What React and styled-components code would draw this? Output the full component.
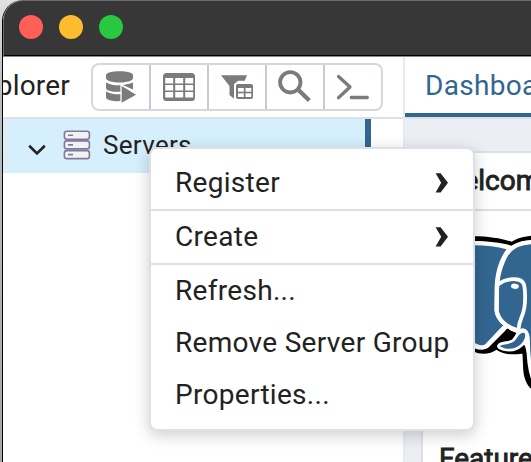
import React from 'react';
import styled, { createGlobalStyle } from 'styled-components';

const Global = createGlobalStyle`
  *, *::before, *::after { box-sizing: border-box; }
  body {
    margin: 0;
    overflow: hidden;
    font-family: Roboto, "Liberation Sans", sans-serif;
    color: #222222;
  }
`;

const line = '#dde0e6';
const blue = '#326690';

const Desktop = styled.div`
  width: 531px;
  height: 462px;
  padding-left: 2px;
  overflow: hidden;
  position: relative;
  background: linear-gradient(#e0e0e0, #bcbcbc 20%, #a6a6a6);
`;

const Window = styled.div`
  height: 462px;
  display: flex;
  flex-direction: column;
  overflow: hidden;
  background: #fff;
  border-left: 1px solid #000;
  border-top-left-radius: 21px;
`;

const TitleBar = styled.div`
  flex: none;
  height: 57px;
  padding: 0 0 3px 15px;
  display: flex;
  align-items: center;
  gap: 16px;
  background: #373737;
  border-top: 1px solid #6c6c6c;
  border-left: 1px solid #6c6c6c;
  border-top-left-radius: 20px;
  border-bottom: 1px solid #8a8a8a;
  box-shadow: inset 0 -1px 0 #000;
`;

const Light = styled.span`
  width: 24px;
  height: 24px;
  border-radius: 50%;
  background: ${(p) => p.$color};
`;

const Body = styled.div`
  flex: 1;
  display: flex;
  min-height: 0;
`;

const Explorer = styled.div`
  flex: none;
  width: 402px;
  border-right: 2px solid #e7e9ef;
`;

const ExplorerHeader = styled.div`
  height: 62px;
  display: flex;
  align-items: center;
  border-bottom: 2px solid ${line};
  overflow: hidden;
`;

const ExplorerTitle = styled.div`
  width: 67px;
  flex: none;
  display: flex;
  justify-content: flex-end;
  font-size: 28px;
  line-height: 32px;
  letter-spacing: 0.2px;
  padding-bottom: 2px;
  white-space: nowrap;
`;

const ButtonGroup = styled.div`
  display: flex;
  width: 292px;
  height: 48px;
  margin-left: 21px;
  border: 2px solid #d3d7df;
  border-radius: 8px;
`;

const ToolButton = styled.button`
  flex: none;
  width: 58px;
  height: 44px;
  padding: 0;
  border: 0;
  border-right: 2px solid #c5cad6;
  background: none;
  color: #7b7b7b;
  display: flex;
  &:last-child { border-right: 0; width: 56px; }
  svg { display: block; flex: none; }
`;

const TreeRow = styled.div`
  width: 368px;
  height: 54px;
  display: flex;
  align-items: center;
  background: #d6effc;
  border-right: 6px solid ${blue};
  font-size: 26px;
  line-height: 32px;
  letter-spacing: 0.3px;
`;

const RowMark = styled.span`
  width: 2px;
  height: 50px;
  margin: 0 19px 0 4px;
  background: #e3e8f1;
`;

const RowLabel = styled.span`
  margin-left: 12px;
  padding-bottom: 3px;
`;

const Main = styled.div`
  flex: 1;
  min-width: 0;
  display: flex;
  flex-direction: column;
  overflow: hidden;
`;

const TabBar = styled.div`
  flex: none;
  height: 62px;
  border-bottom: 2px solid ${line};
`;

const Tab = styled.div`
  width: 180px;
  height: 60px;
  padding-left: 20px;
  border-bottom: 4px solid ${blue};
  color: ${blue};
  font-size: 28px;
  line-height: 58px;
  letter-spacing: 0.3px;
`;

const Content = styled.div`
  flex: 1;
  padding: 32px 0 0 16px;
  background: #ebeef3;
`;

const Card = styled.div`
  width: 220px;
  height: 360px;
  background: #fff;
  border: 2px solid ${line};
`;

const Heading = styled.div`
  padding-left: 16px;
  font-size: 28px;
  line-height: 56px;
  -webkit-text-stroke: 0.9px #222;
`;

const CardTitle = styled(Heading)`
  height: 58px;
  border-bottom: 2px solid ${line};
`;

const LogoArea = styled.div`
  height: 220px;
  padding: 19px 0 0 50px;
`;

const Menu = styled.div`
  position: absolute;
  left: 149px;
  top: 147px;
  width: 326px;
  height: 284px;
  padding: 8px 0;
  background: #fff;
  border: 2px solid ${line};
  border-radius: 8px;
  box-shadow: 0 4px 16px rgba(0, 0, 0, 0.2);
`;

const MenuItem = styled.div`
  height: 52px;
  padding: 0 24px;
  display: flex;
  align-items: center;
  justify-content: space-between;
  font-size: 28px;
  line-height: 32px;
  letter-spacing: 0.3px;
  white-space: nowrap;
`;

const Separator = styled.div`
  height: 2px;
  background: ${line};
`;

const DatabaseIcon = () => (
  <svg width="56" height="44" viewBox="93 65 56 44" fill="currentColor">
    <path d="M106 75.3c0-5.4 27-5.4 27 0v2.6c0 6-27 6-27 0z" />
    <path d="M106 82.5c4 2.3 9 2.9 14.4 2.8v6.5c-6 .2-14.4-.6-14.4-3.9z" />
    <path d="M122.800 85c4-.4 7.700-1.100 10.200-2.400v6.900z" />
    <path d="M106 91.500c4 2.300 9 2.900 14.400 2.800v6.800c-6 .3-14.400-.6-14.400-3.900z" />
    <path d="M121.700 86L136 94.700l-14.300 8.100z" />
  </svg>
);

const TableIcon = () => (
  <svg width="56" height="44" viewBox="151 65 56 44">
    <rect x="163" y="73" width="32" height="28" rx="3.5" fill="currentColor" />
    <g fill="#fff">
      {[78, 85, 92].map((y) =>
        [165.2, 175.2, 185.2].map((x) => (
          <rect key={`${x}-${y}`} x={x} y={y} width="8" height="5.4" rx="0.5" />
        ))
      )}
    </g>
  </svg>
);

const FilterIcon = () => (
  <svg width="56" height="44" viewBox="209 65 56 44">
    <path d="M221 75.3h26l-2.3 5.5h-6.4L234 84v14.8L229.500 95v-9z" fill="currentColor" />
    <rect x="235" y="83" width="19" height="17" rx="2" fill="#fff" />
    <rect x="236" y="84" width="17" height="15" rx="2" fill="currentColor" />
    <g fill="#fff">
      <rect x="238" y="88" width="5.8" height="3.7" />
      <rect x="245.5" y="88" width="5.8" height="3.7" />
      <rect x="238" y="93.3" width="5.8" height="3.7" />
      <rect x="245.5" y="93.3" width="5.8" height="3.7" />
    </g>
  </svg>
);

const SearchIcon = () => (
  <svg width="56" height="44" viewBox="267 65 56 44" fill="none" stroke="currentColor" strokeWidth="3.8">
    <circle cx="290.3" cy="82.3" r="10.2" />
    <path d="M298 89.500l11.300 11" strokeWidth="4.4" />
  </svg>
);

const TerminalIcon = () => (
  <svg width="56" height="44" viewBox="325 65 56 44" fill="none" stroke="currentColor" strokeWidth="3.3" strokeLinecap="round" strokeLinejoin="round">
    <path d="M338.5 76.5L350 87l-11.5 10.7M351.3 97.500h16" />
  </svg>
);

const ChevronIcon = styled.svg`
  margin-top: 7px;
`;

const ChevronDown = () => (
  <ChevronIcon width="18" height="12" viewBox="0 0 18 12" fill="none" stroke="#222" strokeWidth="2.6">
    <path d="M1.2 1.800L9 9.400l7.800-7.600" />
  </ChevronIcon>
);

const ServersIcon = styled.svg`
  margin-left: 17px;
  margin-top: -2px;
`;

const Servers = () => (
  <ServersIcon width="28" height="30" viewBox="0 0 28 30" fill="#f2f2f2" stroke="#7f7a9b" strokeWidth="1.6">
    {[1.2, 10.9, 20.6].map((y) => (
      <g key={y}>
        <rect x="1.4" y={y} width="25" height="8" rx="2.4" />
        <path d={`M5 ${y + 4}h5`} strokeWidth="1.6" />
      </g>
    ))}
  </ServersIcon>
);

const MenuArrow = () => (
  <svg width="14" height="20" viewBox="0 0 14 20" fill="#222">
    <path d="M0.600 0.200h5L13 9.800 5.600 19.400H0.600L6.200 9.800z" />
  </svg>
);

const Elephant = () => (
  <svg width="60" height="165" viewBox="473 230 60 165" fill="none">
    <path
      d="M470 236.200c16-.4 32 2 41.700 5.600 5-3.500 12-5.500 22.300-6.300V391c-6.500-4-10.300-12-10.800-22l-.8-16c-8 1.500-18.500 1.500-25.400-3.500-7 5-18 6.500-27 0z"
      fill="#000"
    />
    <path
      d="M470 241c16-.4 32 1.600 41.700 4.700 6-3.500 13-5.200 22.300-5.700V378l-9-32-17-18-19 19c-5 4-13 3-19-1z"
      fill="#fff"
    />
    <path d="M506.500 329l10 4-4.500 8-9 2-4.500 3 5.500 4.500c7 1.500 14 0 19-3.500l1 6.500c-8 1.500-21 1.500-28-4z" fill="#000" />
    <path d="M470 245.200c14-.3 26 1.200 36.500 4C500 258 495.500 270 494.700 286l-.2 23c.3 6 3.500 11.500 9 16.500L485.500 345c-4.500 2.500-9 1-15.500-3z" fill={blue} />
    <path d="M470 342c6 5 12 6.500 16.500 4L506 325.500" stroke="#fff" strokeWidth="4.200" />
    <path d="M534 243.500c-18 1-27.500 7-31 20-3 8-4 14-4.300 46 .3 8 7 17 17 20l8-1c3 1 5 4 5.200 11 .2 14 1 24 4.600 36z" fill={blue} />
    <path
      d="M534 242c-14 .4-25 4-30.500 18-5.500 12-7 22-6.600 34l-.3 16c.5 8 8 16.500 20 20"
      stroke="#fff"
      strokeWidth="4.200"
    />
    <path
      d="M498 284.500c6-4.500 13-6 19.500-5 7 1.200 7.300 6 7.600 16 .2 10-1 16-3.300 21-1.500 3.500-3 9-3.500 14"
      stroke="#fff"
      strokeWidth="3.800"
    />
    <path d="M521 330.500c5-1 6.800 3 7 10 .2 14 .6 26 4.500 37" stroke="#fff" strokeWidth="3.800" />
    <path
      d="M499 345c3.500-3 10.500-1.500 14-4.500 3.500-3.400 4.500-8.500 9.500-9.200 4-.4 5.300 3.700 3 8.700-4 8.500-13 11.500-21.500 9.500-2.600-.8-7-2-5-4.500z"
      fill={blue}
      stroke="#fff"
      strokeWidth="2.800"
    />
    <ellipse cx="515" cy="286.300" rx="4" ry="2.600" fill="#fff" transform="rotate(8 515 286)" />
  </svg>
);

const tools = [DatabaseIcon, TableIcon, FilterIcon, SearchIcon, TerminalIcon];

export default function App() {
  return (
    <>
      <Global />
      <Desktop>
        <Window>
          <TitleBar>
            <Light $color="#ff5f57" />
            <Light $color="#febc2e" />
            <Light $color="#28c840" />
          </TitleBar>
          <Body>
            <Explorer>
              <ExplorerHeader>
                <ExplorerTitle>plorer</ExplorerTitle>
                <ButtonGroup>
                  {tools.map((Icon, i) => (
                    <ToolButton key={i}><Icon /></ToolButton>
                  ))}
                </ButtonGroup>
              </ExplorerHeader>
              <TreeRow>
                <RowMark />
                <ChevronDown />
                <Servers />
                <RowLabel>Servers</RowLabel>
              </TreeRow>
            </Explorer>
            <Main>
              <TabBar><Tab>Dashboard</Tab></TabBar>
              <Content>
                <Card>
                  <CardTitle>Welcome</CardTitle>
                  <LogoArea><Elephant /></LogoArea>
                  <Heading>Feature</Heading>
                </Card>
              </Content>
            </Main>
          </Body>
        </Window>
        <Menu>
          <MenuItem>Register<MenuArrow /></MenuItem>
          <Separator />
          <MenuItem>Create<MenuArrow /></MenuItem>
          <Separator />
          <MenuItem>Refresh...</MenuItem>
          <MenuItem>Remove Server Group</MenuItem>
          <MenuItem>Properties...</MenuItem>
        </Menu>
      </Desktop>
    </>
  );
}
